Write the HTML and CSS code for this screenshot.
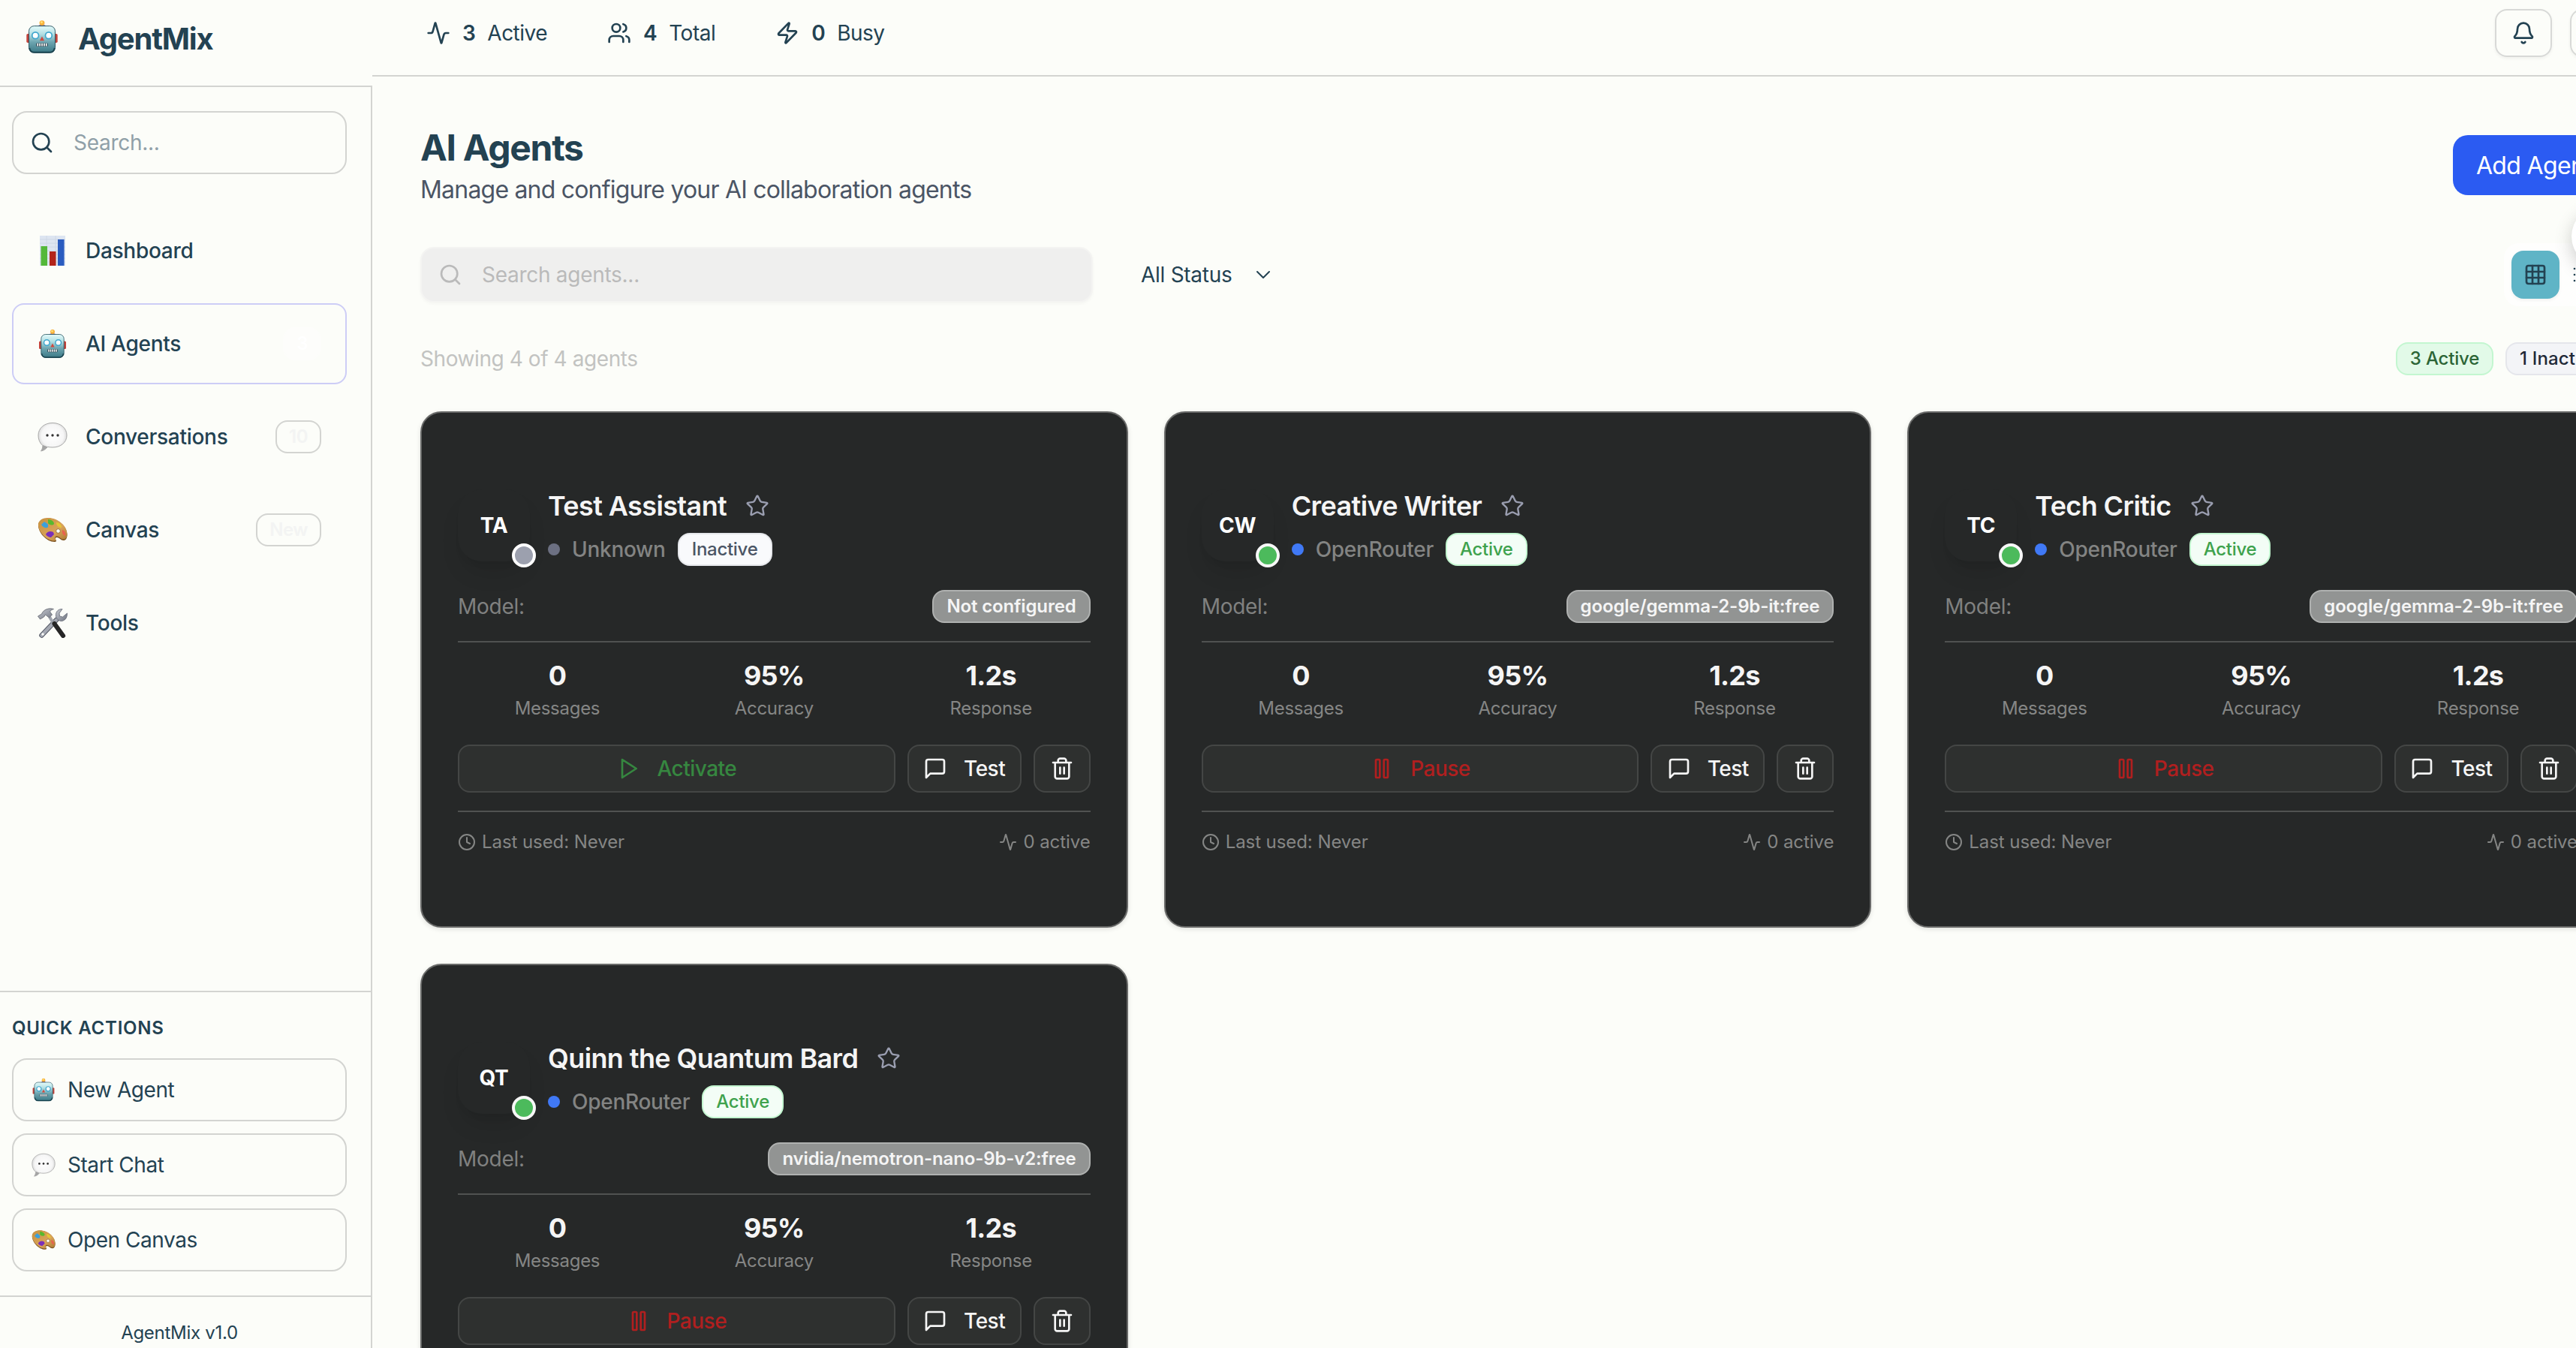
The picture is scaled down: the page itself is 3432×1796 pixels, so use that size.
FILE: index.html
```html
<!DOCTYPE html>
<html lang="en">
<head>
<meta charset="utf-8">
<title>AgentMix</title>
<link rel="stylesheet" href="styles.css">
</head>
<body>
<svg class="defs" width="0" height="0" aria-hidden="true">
  <defs>
    <linearGradient id="g-face" x1="0" y1="0" x2="0" y2="1"><stop offset="0" stop-color="#e3fbfb"/><stop offset=".3" stop-color="#b4dfe3"/><stop offset=".6" stop-color="#6da5b0"/><stop offset="1" stop-color="#3b7885"/></linearGradient>
    <radialGradient id="g-bubble" cx=".5" cy=".45" r=".55"><stop offset="0" stop-color="#fff"/><stop offset=".7" stop-color="#f6f6f6"/><stop offset="1" stop-color="#cfcfcf"/></radialGradient>
    <linearGradient id="g-wood" x1="0" y1="0" x2="1" y2="1"><stop offset="0" stop-color="#c8913d"/><stop offset=".6" stop-color="#d9a45a"/><stop offset="1" stop-color="#a9752f"/></linearGradient>
    <linearGradient id="g-steel" x1="0" y1="0" x2="1" y2="1"><stop offset="0" stop-color="#c9ccd3"/><stop offset="1" stop-color="#6f7480"/></linearGradient>
  </defs>
  <symbol id="robot" viewBox="0 0 40 40">
    <rect x="2" y="16.500" width="5" height="10.500" rx="1.500" fill="#c2433b"/><rect x="33" y="16.500" width="5" height="10.500" rx="1.500" fill="#c2433b"/>
    <path d="M15.500 8c0-2.500 9-2.500 9 0z" fill="#5b4286"/><circle cx="20" cy="4" r="3" fill="#f7b23c"/><circle cx="19.500" cy="3.200" r="1.300" fill="#ffe27a"/>
    <rect x="4.800" y="7.500" width="30.400" height="31" rx="6" fill="url(#g-face)" stroke="#24505c" stroke-width=".8"/>
    <path d="M5.500 33c.5 3.500 2.500 5 5.300 5h18.400c2.800 0 4.800-1.500 5.300-5" fill="none" stroke="#1b4450" stroke-width="1.600"/>
    <circle cx="12.300" cy="18.500" r="3.800" fill="#fff" stroke="#3fa7ce" stroke-width="1.500"/><circle cx="27.700" cy="18.500" r="3.800" fill="#fff" stroke="#3fa7ce" stroke-width="1.500"/>
    <path d="M20 19.500l2.600 5h-5.200z" fill="#d3473c"/>
    <rect x="13.200" y="27.300" width="13.600" height="4" rx="1" fill="#2c4550"/><path d="M15 27.600v3.200M17.500 27.600v3.200M20 27.600v3.200M22.500 27.600v3.200M25 27.600v3.200" stroke="#fff" stroke-width="1.500"/>
  </symbol>
  <symbol id="chart" viewBox="0 0 40 40">
    <rect x="3" y="0" width="34" height="40" fill="#dde5f1"/><path d="M3 5h34M3 10h34M3 15h34M3 20h34M3 25h34M3 30h34M3 35h34M12 0v40M24 0v40" stroke="#cbd5e5" stroke-width=".8"/>
    <rect x="4.500" y="14" width="8.500" height="26" fill="#54b83a"/><rect x="16" y="21" width="8.500" height="19" fill="#b3241b"/><rect x="27" y="5" width="8.500" height="35" fill="#2a5cc0"/>
  </symbol>
  <symbol id="bubble" viewBox="0 0 40 40">
    <path d="M20 1.500c11 0 19 7 19 16.500S31 34 20 34c-2.200 0-4.500-.2-6.500-.6C11 36.500 8 38.500 4.500 39c1.500-2 2.500-4.500 2.300-7.500C3 28.500 1 23.500 1 18 1 8.500 9 1.500 20 1.500z" fill="url(#g-bubble)" stroke="#a9a9a9" stroke-width="1"/>
    <path d="M7 31c.3 3-.7 5.500-2.300 7.700 3.500-.5 6.300-2.500 8.600-5.400z" fill="#a4a4a4"/>
    <circle cx="13" cy="18" r="1.700" fill="#333"/><circle cx="20" cy="18" r="1.700" fill="#333"/><circle cx="27" cy="18" r="1.700" fill="#333"/>
  </symbol>
  <symbol id="palette" viewBox="0 0 40 40">
    <path d="M1 14C1 8 7 4.500 14 4.500c13 0 25.500 10.500 25.500 22 0 5-2 7.500-5 7.500-3.500 0-5.500-4-8.500-4-2.500 0-2.500 2-1.500 3.500 1 1.600.3 2.500-1.700 2.500C12 36 1 23.500 1 14z" fill="#7a5120"/>
    <path d="M1 13.200C1 7.200 7 4 14 4c13 0 25.500 10.500 25.500 21.500 0 4.500-2 7-5 7-3.500 0-5.500-4-8.500-4-3 0-3 2-2 3.500 1 1.600.3 2.500-1.700 2.500C12 34.500 1 22.500 1 13.200z" fill="url(#g-wood)"/>
    <circle cx="27.500" cy="21.500" r="2.800" fill="#fcfdf9" stroke="#8d5e22" stroke-width=".8"/>
    <path d="M5 13l4-4c3 2 6 3 5 7-1 2-6 2-9-3z" fill="#3ba0db"/><path d="M14 6c3 0 8 2 8 6-2 3-7 1-8-1z" fill="#57b92e"/><path d="M25 10c4 0 7 3 7 7-3 0-7-2-7-7z" fill="#e6c634"/><path d="M33 20c3 1 5 4 4 8-3-1-5-4-4-8z" fill="#e8614f"/><path d="M11 26c2-4 6-5 10-3l1 3-4 4c-3 0-6-2-7-4z" fill="#7a2fb9"/>
  </symbol>
  <symbol id="tools" viewBox="0 0 40 40">
    <path d="M25 16L5.500 36.500" stroke="#555a66" stroke-width="6.500" stroke-linecap="round"/><path d="M25 16L5.500 36.500" stroke="#a4a8b2" stroke-width="4.500" stroke-linecap="round"/>
    <path d="M33 1.500c-5-.5-9 3.500-8.500 8.500-.5 5 6 9.500 10.500 6.500 3-1.500 4.500-4.500 4.500-9.500l-6 5-4-1-.5-4z" fill="url(#g-steel)" stroke="#656a76" stroke-width=".8"/>
    <circle cx="7" cy="35" r="1.700" fill="#fcfdf9"/>
    <path d="M16 12L22 22" stroke="#9fa4ad" stroke-width="4"/><path d="M22.500 21L34 37" stroke="#262626" stroke-width="6" stroke-linecap="round"/>
    <path d="M.5 11l3 4 5-3 2-3 5 4 4-4-3-4c1-2 3-3 5-3.500C15-.500 8 2 5.500 8z" fill="url(#g-steel)" stroke="#62666f" stroke-width=".8"/>
  </symbol>
  <symbol id="search" viewBox="0 0 24 24"><circle cx="11" cy="11" r="8"/><path d="m21 21-4.300-4.300"/></symbol>
  <symbol id="activity" viewBox="0 0 24 24"><path d="M22 12h-2.480a2 2 0 0 0-1.930 1.460l-2.350 8.360a.25.25 0 0 1-.48 0L9.240 2.180a.25.25 0 0 0-.48 0l-2.350 8.360A2 2 0 0 1 4.490 12H2"/></symbol>
  <symbol id="users" viewBox="0 0 24 24"><path d="M16 21v-2a4 4 0 0 0-4-4H6a4 4 0 0 0-4 4v2"/><circle cx="9" cy="7" r="4"/><path d="M22 21v-2a4 4 0 0 0-3-3.870"/><path d="M16 3.130a4 4 0 0 1 0 7.750"/></symbol>
  <symbol id="zap" viewBox="0 0 24 24"><path d="M4 14a1 1 0 0 1-.78-1.630l9.900-10.200a.5.5 0 0 1 .86.460l-1.920 6.020A1 1 0 0 0 13 10h7a1 1 0 0 1 .78 1.630l-9.900 10.200a.5.5 0 0 1-.86-.460l1.920-6.020A1 1 0 0 0 11 14z"/></symbol>
  <symbol id="bell" viewBox="0 0 24 24"><path d="M10.268 21a2 2 0 0 0 3.464 0"/><path d="M3.262 15.326A1 1 0 0 0 4 17h16a1 1 0 0 0 .74-1.673C19.410 13.956 18 12.499 18 8A6 6 0 0 0 6 8c0 4.499-1.411 5.956-2.738 7.326"/></symbol>
  <symbol id="grid" viewBox="0 0 24 24"><rect width="18" height="18" x="3" y="3" rx="2"/><path d="M3 9h18M3 15h18M9 3v18M15 3v18"/></symbol>
  <symbol id="list" viewBox="0 0 24 24"><path d="M3 12h.01M3 18h.01M3 6h.01M8 12h13M8 18h13M8 6h13"/></symbol>
  <symbol id="chevron" viewBox="0 0 24 24"><path d="m6 9 6 6 6-6"/></symbol>
  <symbol id="star" viewBox="0 0 24 24"><path d="M11.525 2.295a.53.53 0 0 1 .95 0l2.310 4.679a2.123 2.123 0 0 0 1.595 1.160l5.166.756a.53.53 0 0 1 .294.904l-3.736 3.638a2.123 2.123 0 0 0-.611 1.878l.882 5.140a.53.53 0 0 1-.771.560l-4.618-2.428a2.122 2.122 0 0 0-1.973 0L6.396 21.010a.53.53 0 0 1-.77-.560l.881-5.139a2.122 2.122 0 0 0-.611-1.879L2.160 9.795a.53.53 0 0 1 .294-.906l5.165-.755a2.122 2.122 0 0 0 1.597-1.160z"/></symbol>
  <symbol id="play" viewBox="0 0 24 24"><polygon points="6 3 20 12 6 21 6 3"/></symbol>
  <symbol id="pause" viewBox="0 0 24 24"><rect x="14" y="3" width="4" height="18" rx="1"/><rect x="6" y="3" width="4" height="18" rx="1"/></symbol>
  <symbol id="message" viewBox="0 0 24 24"><path d="M21 15a2 2 0 0 1-2 2H7l-4 4V5a2 2 0 0 1 2-2h14a2 2 0 0 1 2 2z"/></symbol>
  <symbol id="trash" viewBox="0 0 24 24"><path d="M3 6h18M19 6v14c0 1-1 2-2 2H7c-1 0-2-1-2-2V6M8 6V4c0-1 1-2 2-2h4c1 0 2 1 2 2v2M10 11v6M14 11v6"/></symbol>
  <symbol id="clock" viewBox="0 0 24 24"><circle cx="12" cy="12" r="10"/><path d="M12 6v6l4 2"/></symbol>
</svg>

<div class="app">
  <aside class="sidebar">
    <div class="brand"><svg class="brand-icon"><use href="#robot"/></svg><span class="brand-name">AgentMix</span></div>
    <div class="side-body">
      <div class="side-search"><svg class="icon"><use href="#search"/></svg><span>Search...</span></div>
      <nav class="nav">
        <a class="nav-item"><svg class="emoji"><use href="#chart"/></svg><span class="nav-label">Dashboard</span></a>
        <a class="nav-item current"><svg class="emoji"><use href="#robot"/></svg><span class="nav-label">AI Agents</span><span class="nav-badge solid">3</span></a>
        <a class="nav-item"><svg class="emoji"><use href="#bubble"/></svg><span class="nav-label">Conversations</span><span class="nav-badge">10</span></a>
        <a class="nav-item"><svg class="emoji"><use href="#palette"/></svg><span class="nav-label">Canvas</span><span class="nav-badge">New</span></a>
        <a class="nav-item"><svg class="emoji"><use href="#tools"/></svg><span class="nav-label">Tools</span></a>
      </nav>
      <section class="quick">
        <h2 class="quick-title">QUICK ACTIONS</h2>
        <button class="quick-btn"><svg class="emoji-sm"><use href="#robot"/></svg>New Agent</button>
        <button class="quick-btn"><svg class="emoji-sm"><use href="#bubble"/></svg>Start Chat</button>
        <button class="quick-btn"><svg class="emoji-sm"><use href="#palette"/></svg>Open Canvas</button>
      </section>
      <div class="version">AgentMix v1.0</div>
    </div>
  </aside>

  <div class="page">
    <header class="topbar">
      <div class="counts">
        <div class="count"><svg class="icon"><use href="#activity"/></svg><b>3</b><span>Active</span></div>
        <div class="count"><svg class="icon"><use href="#users"/></svg><b>4</b><span>Total</span></div>
        <div class="count"><svg class="icon"><use href="#zap"/></svg><b>0</b><span>Busy</span></div>
      </div>
      <div class="top-actions">
        <button class="top-btn"><svg class="icon"><use href="#bell"/></svg></button>
        <button class="top-btn"></button>
      </div>
    </header>

    <main class="main">
      <div class="heading">
        <div><h1 class="title">AI Agents</h1><p class="subtitle">Manage and configure your AI collaboration agents</p></div>
        <button class="add-btn">Add Agent</button>
      </div>
      <div class="filters">
        <div class="agent-search"><svg class="icon"><use href="#search"/></svg><span>Search agents...</span></div>
        <div class="status-select"><span>All Status</span><svg class="icon thin"><use href="#chevron"/></svg></div>
        <div class="view-toggle">
          <button class="view-btn on"><svg class="icon"><use href="#grid"/></svg></button>
          <button class="view-btn"><svg class="icon"><use href="#list"/></svg></button>
        </div>
      </div>
      <div class="results">
        <span class="showing">Showing 4 of 4 agents</span>
        <div class="summary"><span class="pill green">3 Active</span><span class="pill gray">1 Inactive</span></div>
      </div>

      <div class="cards">
        <article class="card">
          <div class="card-head">
            <div class="avatar">TA<i class="presence off"></i></div>
            <div class="who">
              <div class="name-row"><h3 class="name">Test Assistant</h3><svg class="icon star"><use href="#star"/></svg></div>
              <div class="provider"><i class="dot unknown"></i><span>Unknown</span><em class="state inactive">Inactive</em></div>
            </div>
          </div>
          <div class="model"><span>Model:</span><em class="model-tag">Not configured</em></div>
          <div class="stats"><div><b>0</b><span>Messages</span></div><div><b>95%</b><span>Accuracy</span></div><div><b>1.2s</b><span>Response</span></div></div>
          <div class="actions"><button class="btn grow go"><svg class="icon"><use href="#play"/></svg>Activate</button><button class="btn test"><svg class="icon"><use href="#message"/></svg>Test</button><button class="btn del"><svg class="icon"><use href="#trash"/></svg></button></div>
          <div class="card-foot"><span><svg class="icon small"><use href="#clock"/></svg>Last used: Never</span><span><svg class="icon small"><use href="#activity"/></svg>0 active</span></div>
        </article>

        <article class="card">
          <div class="card-head">
            <div class="avatar">CW<i class="presence"></i></div>
            <div class="who">
              <div class="name-row"><h3 class="name">Creative Writer</h3><svg class="icon star"><use href="#star"/></svg></div>
              <div class="provider"><i class="dot"></i><span>OpenRouter</span><em class="state">Active</em></div>
            </div>
          </div>
          <div class="model"><span>Model:</span><em class="model-tag">google/gemma-2-9b-it:free</em></div>
          <div class="stats"><div><b>0</b><span>Messages</span></div><div><b>95%</b><span>Accuracy</span></div><div><b>1.2s</b><span>Response</span></div></div>
          <div class="actions"><button class="btn grow stop"><svg class="icon"><use href="#pause"/></svg>Pause</button><button class="btn test"><svg class="icon"><use href="#message"/></svg>Test</button><button class="btn del"><svg class="icon"><use href="#trash"/></svg></button></div>
          <div class="card-foot"><span><svg class="icon small"><use href="#clock"/></svg>Last used: Never</span><span><svg class="icon small"><use href="#activity"/></svg>0 active</span></div>
        </article>

        <article class="card">
          <div class="card-head">
            <div class="avatar">TC<i class="presence"></i></div>
            <div class="who">
              <div class="name-row"><h3 class="name">Tech Critic</h3><svg class="icon star"><use href="#star"/></svg></div>
              <div class="provider"><i class="dot"></i><span>OpenRouter</span><em class="state">Active</em></div>
            </div>
          </div>
          <div class="model"><span>Model:</span><em class="model-tag">google/gemma-2-9b-it:free</em></div>
          <div class="stats"><div><b>0</b><span>Messages</span></div><div><b>95%</b><span>Accuracy</span></div><div><b>1.2s</b><span>Response</span></div></div>
          <div class="actions"><button class="btn grow stop"><svg class="icon"><use href="#pause"/></svg>Pause</button><button class="btn test"><svg class="icon"><use href="#message"/></svg>Test</button><button class="btn del"><svg class="icon"><use href="#trash"/></svg></button></div>
          <div class="card-foot"><span><svg class="icon small"><use href="#clock"/></svg>Last used: Never</span><span><svg class="icon small"><use href="#activity"/></svg>0 active</span></div>
        </article>

        <article class="card">
          <div class="card-head">
            <div class="avatar">QT<i class="presence"></i></div>
            <div class="who">
              <div class="name-row"><h3 class="name">Quinn the Quantum Bard</h3><svg class="icon star"><use href="#star"/></svg></div>
              <div class="provider"><i class="dot"></i><span>OpenRouter</span><em class="state">Active</em></div>
            </div>
          </div>
          <div class="model"><span>Model:</span><em class="model-tag">nvidia/nemotron-nano-9b-v2:free</em></div>
          <div class="stats"><div><b>0</b><span>Messages</span></div><div><b>95%</b><span>Accuracy</span></div><div><b>1.2s</b><span>Response</span></div></div>
          <div class="actions"><button class="btn grow stop"><svg class="icon"><use href="#pause"/></svg>Pause</button><button class="btn test"><svg class="icon"><use href="#message"/></svg>Test</button><button class="btn del"><svg class="icon"><use href="#trash"/></svg></button></div>
        </article>
      </div>
    </main>
  </div>
  <button class="float-btn"></button>
</div>
</body>
</html>
```
FILE: styles.css
```css
* { box-sizing: border-box; margin: 0; padding: 0; }
html, body { height: 1796px; overflow: hidden; background: #fcfdf9; }
body { font-family: Inter, "Liberation Sans", sans-serif; font-size: 28px; color: #234252; letter-spacing: -0.01em; }
button { font: inherit; color: inherit; letter-spacing: inherit; border: none; background: none; }
em, i { font-style: normal; }
.defs { position: absolute; }
.app { position: relative; display: flex; width: 3548px; height: 1796px; overflow: hidden; }

.icon { flex: none; width: 32px; height: 32px; fill: none; stroke: currentColor; stroke-width: 2; stroke-linecap: round; stroke-linejoin: round; }
.icon.small { width: 24px; height: 24px; }
.icon.thin { stroke-width: 1.5; }

/* Sidebar */
.sidebar { flex: none; width: 496px; height: 1824px; display: flex; flex-direction: column; }
.brand { flex: none; height: 116px; display: flex; align-items: center; gap: 24px; padding: 0 0 12px 32px; border-bottom: 2px solid #d3d4d1; }
.brand-icon { width: 48px; height: 46px; position: relative; top: -2px; }
.brand-name { font-size: 40px; font-weight: 700; letter-spacing: -0.03em; }
.side-body { flex: 1; display: flex; flex-direction: column; border-right: 2px solid #d3d4d1; padding-top: 32px; }
.side-search { display: flex; align-items: center; gap: 26px; height: 84px; margin: 0 32px 0 16px; padding-left: 22px; border: 2px solid #d3d4d1; border-radius: 20px; }
.side-search span { color: #90a0a8; }
.nav { flex: 1; display: flex; flex-direction: column; gap: 16px; padding: 48px 32px 0 16px; }
.nav-item { display: flex; align-items: center; gap: 24px; height: 108px; padding: 0 32px; border: 2px solid transparent; border-radius: 16px; }
.nav-item.current { border-color: #cdcdf6; }
.emoji { flex: none; width: 40px; height: 40px; }
.nav-label { flex: 1; font-weight: 500; }
.nav-badge { height: 44px; padding: 0 16px; border: 2px solid #d3d4d1; border-radius: 16px; font-size: 24px; line-height: 40px; font-weight: 600; color: #f3f4f3; letter-spacing: -0.02em; }
.nav-badge.solid { border-color: #fdfdfb; background: #fdfdfb; color: #fff; }
.quick { display: flex; flex-direction: column; gap: 16px; padding: 32px 32px 32px 16px; border-top: 2px solid #d3d4d1; }
.quick-title { font-size: 24px; line-height: 32px; font-weight: 600; letter-spacing: 0.033em; margin-bottom: 8px; }
.quick-btn { display: flex; align-items: center; gap: 16px; height: 84px; padding-left: 24px; border: 2px solid #d3d4d1; border-radius: 20px; letter-spacing: -0.016em; }
.emoji-sm { width: 32px; height: 32px; }
.version { height: 98px; padding: 32px 16px 0 0; border-top: 2px solid #d3d4d1; text-align: center; font-size: 24px; line-height: 32px; }

/* Top bar */
.page { flex: 1; min-width: 0; }
.topbar { display: flex; justify-content: space-between; height: 102px; padding: 12px 48px 24px 72px; border-bottom: 2px solid #d3d4d1; }
.counts { display: flex; align-items: center; gap: 80px; letter-spacing: -0.018em; }
.count { display: flex; align-items: center; gap: 16px; }
.count b { font-weight: 600; }
.top-actions { display: flex; gap: 24px; }
.top-btn { display: flex; align-items: center; justify-content: center; width: 76px; height: 64px; border: 2px solid #d8d9d7; border-radius: 16px; box-shadow: 0 2px 4px rgba(0, 0, 0, .05); }

/* Page heading and filters */
.main { padding: 64px 64px 0; }
.heading { display: flex; justify-content: space-between; align-items: flex-start; height: 112px; }
.title { font-size: 48px; line-height: 62px; font-weight: 700; letter-spacing: -0.027em; }
.subtitle { font-size: 32px; line-height: 50px; color: #4b5565; letter-spacing: -0.025em; }
.add-btn { width: 216px; height: 80px; margin-top: 14px; border-radius: 20px; background: #2b5bf2; color: #fff; font-size: 32px; letter-spacing: -0.02em; }
.filters { display: flex; align-items: center; height: 84px; margin-top: 46px; }
.agent-search { display: flex; align-items: center; gap: 26px; width: 896px; height: 74px; padding-left: 22px; border: 2px solid #f4f4f2; border-radius: 18px; background: #efefee; color: #bababa; box-shadow: 0 2px 4px rgba(0, 0, 0, .03); }
.status-select { display: flex; align-items: center; gap: 26px; margin-left: 64px; }
.view-toggle { display: flex; margin-left: auto; padding: 10px; border-radius: 20px; background: #fefefd; }
.view-btn { display: flex; align-items: center; justify-content: center; width: 64px; height: 64px; border-radius: 16px; }
.view-btn.on { background: #5fb4c6; box-shadow: 0 2px 4px rgba(0, 0, 0, .06); }
.results { display: flex; align-items: center; justify-content: space-between; height: 44px; margin: 48px 0; }
.showing { color: #c2c3c1; letter-spacing: -0.015em; }
.summary { display: flex; gap: 16px; }
.pill { height: 44px; padding: 0 17px; border: 2px solid; border-radius: 16px; font-size: 24px; line-height: 40px; font-weight: 500; white-space: nowrap; }
.pill.green { border-color: #c3f6d0; background: #e2fae8; color: #2c6536; letter-spacing: -0.008em; }
.pill.gray { border-color: #e5e6eb; background: #f3f4f7; color: #1f2937; letter-spacing: 0.006em; }

/* Agent cards */
.cards { display: grid; grid-template-columns: repeat(3, 1fr); gap: 48px; }
.card { height: 688px; padding: 96px 48px; border: 2px solid #696a69; border-radius: 28px; background: #262828; color: #f5f5f5; box-shadow: 0 2px 6px rgba(0, 0, 0, .12); }
.card-head { display: flex; align-items: center; gap: 24px; height: 108px; }
.avatar { position: relative; flex: none; width: 96px; height: 96px; border-radius: 32px; font-weight: 700; line-height: 96px; text-align: center; color: #fff; box-shadow: 0 20px 30px -6px rgba(0, 0, 0, .1), 0 8px 12px -8px rgba(0, 0, 0, .1); background: #262828; }
.presence { position: absolute; right: -8px; bottom: -8px; width: 32px; height: 32px; border: 4px solid #f7f7f7; border-radius: 50%; background: #4cba5c; }
.presence.off { background: #9ca0ae; border-color: #fff; }
.name-row { display: flex; align-items: center; gap: 25px; height: 56px; margin-bottom: 8px; }
.name { font-size: 36px; font-weight: 600; letter-spacing: -0.017em; white-space: nowrap; }
.star { color: #9a9eb0; stroke-width: 1.8; }
.provider { display: flex; align-items: center; gap: 16px; height: 44px; color: #838483; font-weight: 500; }
.dot { width: 16px; height: 16px; border-radius: 50%; background: #4079f6; }
.dot.unknown { background: #6c7082; }
.state { height: 44px; padding: 0 17px; border: 2px solid #c3f6d0; border-radius: 16px; background: #f3fdf6; color: #3ea24d; font-size: 24px; line-height: 40px; }
.state.inactive { border-color: #e5e7eb; background: #f9fafc; color: #4b5565; }
.model { display: flex; align-items: center; justify-content: space-between; height: 44px; margin: 32px 0 24px; color: #808180; }
.model-tag { height: 44px; padding: 0 17px; border: 2px solid #afb1b0; border-radius: 16px; background: #929493; color: #f5f5f5; font-size: 24px; line-height: 40px; font-weight: 600; letter-spacing: -0.006em; }
.stats { display: grid; grid-template-columns: repeat(3, 1fr); gap: 24px; padding: 16px 0 32px; border-top: 2px solid #505251; text-align: center; }
.stats b { display: block; font-size: 36px; line-height: 56px; font-weight: 700; letter-spacing: -0.02em; }
.stats span { display: block; font-size: 24px; line-height: 32px; color: #858685; }
.actions { display: flex; gap: 16px; margin-bottom: 24px; }
.btn { display: flex; align-items: center; justify-content: center; gap: 22px; height: 64px; border: 2px solid #444645; border-radius: 16px; background: #2e302f; font-weight: 500; letter-spacing: -0.018em; }
.grow { flex: 1; }
.test { width: 152px; }
.del { width: 76px; }
.go { color: #368740; }
.stop { color: #b01f1f; }
.card-foot { display: flex; justify-content: space-between; padding-top: 24px; border-top: 2px solid #505251; font-size: 24px; line-height: 32px; color: #858685; letter-spacing: -0.003em; }
.card-foot span { display: flex; align-items: center; gap: 8px; }

.float-btn { position: absolute; left: 3426px; top: 275px; width: 80px; height: 80px; border-radius: 50%; background: #fff; box-shadow: 0 8px 24px rgba(0, 0, 0, .2); }
```
